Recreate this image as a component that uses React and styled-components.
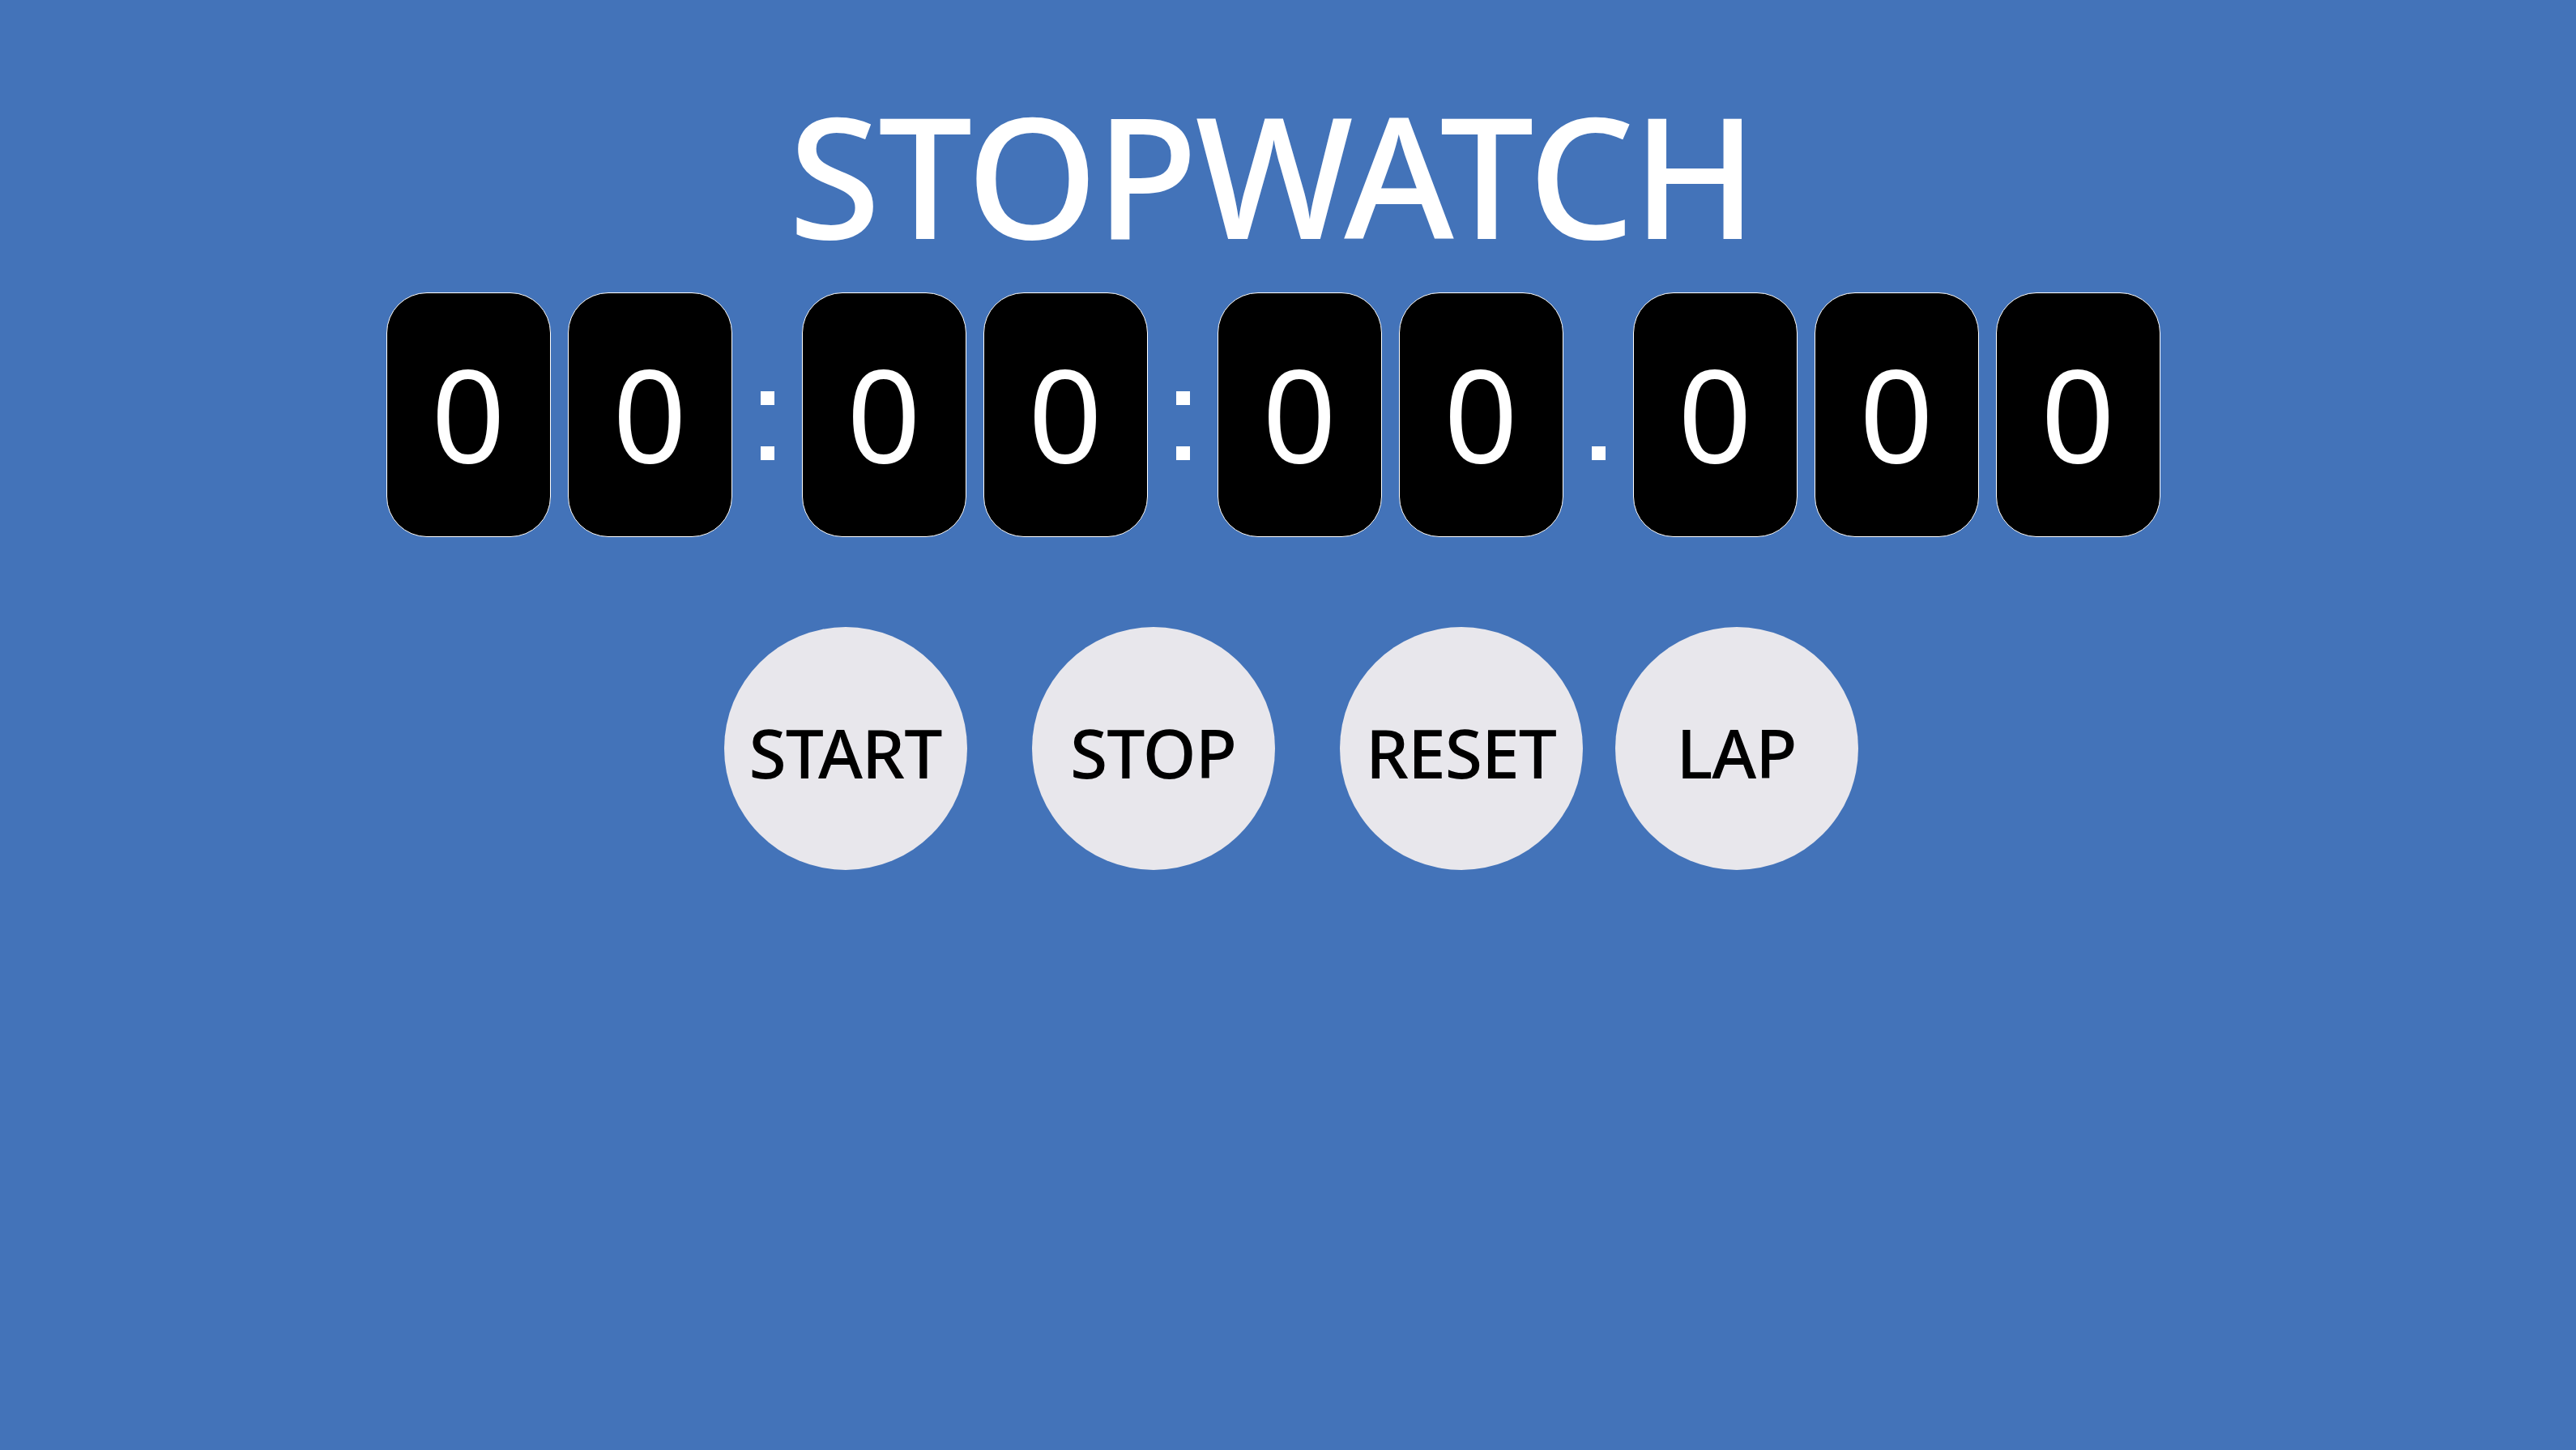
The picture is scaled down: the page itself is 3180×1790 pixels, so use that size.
import styled, { createGlobalStyle } from 'styled-components';

const GlobalStyle = createGlobalStyle`
  html, body {
    margin: 0;
    padding: 0;
    background-color: #4373b9;
  }
  body {
    font-family: 'Noto Sans', 'Open Sans', sans-serif;
  }
`;

const Page = styled.div`
  width: 100%;
  min-height: 100vh;
  display: flex;
  flex-direction: column;
  align-items: center;
  background-color: #4373b9;
`;

const Title = styled.h1`
  margin: 112px 0 0;
  padding-right: 40px;
  font-size: 207px;
  font-weight: 500;
  line-height: 1;
  color: #fff;
  letter-spacing: -3px;
`;

const Clock = styled.div`
  display: flex;
  align-items: stretch;
  gap: 35px;
  margin-top: 42px;
  margin-right: 37px;
`;

const DigitGroup = styled.div`
  display: flex;
  gap: 21px;
`;

const DigitBox = styled.div`
  width: 201px;
  height: 300px;
  border: 1px solid #fff;
  border-radius: 50px;
  background-color: #000;
  color: #fff;
  display: flex;
  align-items: center;
  justify-content: center;
  padding-bottom: 6px;
  box-sizing: content-box;
  height: 294px;
  font-size: 160px;
  line-height: 1;
`;

const Separator = styled.div`
  width: 16px;
  display: flex;
  flex-direction: column;
  justify-content: flex-end;
  gap: 51px;
  padding-bottom: 95px;
`;

const Dot = styled.span`
  display: block;
  width: 17px;
  height: 17px;
  background-color: #fff;
`;

const Controls = styled.div`
  display: flex;
  margin-top: 111px;
  padding-left: 7px;
`;

const RoundButton = styled.button`
  width: 300px;
  height: 300px;
  margin-right: ${(p) => p.$gap || 0}px;
  border: none;
  border-radius: 50%;
  background-color: #e8e7ec;
  color: #000;
  font-family: 'Noto Sans', 'Open Sans', sans-serif;
  font-size: 84px;
  font-weight: 500;
  letter-spacing: -1px;
  padding: 8px 0 0;
  cursor: pointer;
`;

const groups = [['0', '0'], ['0', '0'], ['0', '0'], ['0', '0', '0']];
const separators = ['colon', 'colon', 'dot'];

const buttons = [
  { label: 'START', gap: 80 },
  { label: 'STOP', gap: 80 },
  { label: 'RESET', gap: 40 },
  { label: 'LAP', gap: 0 }
];

export default function App() {
  return (
    <>
      <GlobalStyle />
      <Page>
        <Title>STOPWATCH</Title>
        <Clock>
          {groups.map((digits, i) => [
            <DigitGroup key={`g${i}`}>
              {digits.map((d, j) => (
                <DigitBox key={j}>{d}</DigitBox>
              ))}
            </DigitGroup>,
            separators[i] && (
              <Separator key={`s${i}`}>
                {separators[i] === 'colon' && <Dot />}
                <Dot />
              </Separator>
            )
          ])}
        </Clock>
        <Controls>
          {buttons.map((b) => (
            <RoundButton key={b.label} $gap={b.gap}>
              {b.label}
            </RoundButton>
          ))}
        </Controls>
      </Page>
    </>
  );
}
